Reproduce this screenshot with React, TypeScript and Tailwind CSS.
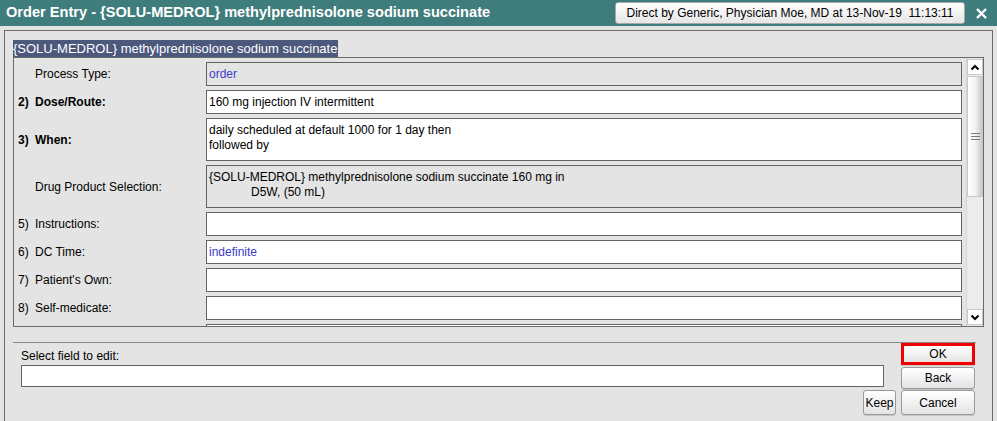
import React from 'react';

type Row = {
  num?: string;
  label?: string;
  bold?: boolean;
  lines?: string[];
  readOnly?: boolean;
  blue?: boolean;
  tall?: boolean;
  indentSecond?: boolean;
};

const rows: Row[] = [
  { label: 'Process Type:', lines: ['order'], readOnly: true, blue: true },
  { num: '2)', label: 'Dose/Route:', bold: true, lines: ['160 mg injection IV intermittent'] },
  { num: '3)', label: 'When:', bold: true, lines: ['daily scheduled at default 1000 for 1 day then', 'followed by'], tall: true },
  {
    label: 'Drug Product Selection:',
    lines: ['{SOLU-MEDROL} methylprednisolone sodium succinate 160 mg in', 'D5W, (50 mL)'],
    readOnly: true,
    tall: true,
    indentSecond: true,
  },
  { num: '5)', label: 'Instructions:', lines: [] },
  { num: '6)', label: 'DC Time:', lines: ['indefinite'], blue: true },
  { num: '7)', label: "Patient's Own:", lines: [] },
  { num: '8)', label: 'Self-medicate:', lines: [] },
  { lines: [] },
];

function FieldRow({ row }: { row: Row }) {
  return (
    <div className={`flex items-center ${row.tall ? 'h-[43px]' : 'h-[24px]'} shrink-0`}>
      {/* Label */}
      <div className={`w-[192px] flex items-center pl-[4px] text-[12px] text-black ${row.bold ? 'font-bold' : ''}`}>
        <span className="w-[17px]">{row.num}</span>
        <span>{row.label}</span>
      </div>
      {/* Value box */}
      <div
        className={`w-[756px] h-full border border-[#646464] ${row.readOnly ? 'bg-[#e4e4e4]' : 'bg-white'} ${
          row.blue ? 'text-[#3c3cc8]' : 'text-black'
        } text-[12px] px-[2px] ${row.tall ? 'pt-[4px] leading-[15px]' : 'flex items-center'}`}
      >
        {row.lines?.map((l, i) => (
          <div key={i} className={row.indentSecond && i === 1 ? 'pl-[42px]' : ''}>
            {l}
          </div>
        ))}
      </div>
    </div>
  );
}

function Caret({ down }: { down?: boolean }) {
  return (
    <svg width="10" height="7" viewBox="0 0 10 7">
      <polyline
        points={down ? '1.5,1.5 5,5 8.5,1.5' : '1.5,5.5 5,2 8.5,5.5'}
        fill="none"
        stroke="#000"
        strokeWidth="2"
      />
    </svg>
  );
}

function Scrollbar() {
  return (
    <div className="w-[17px] h-full flex flex-col bg-[#ececec] border-l border-[#d6d6d6]">
      <div className="h-[16px] mt-[1px] flex items-center justify-center bg-white border border-[#c8c8c8]">
        <Caret />
      </div>
      {/* thumb */}
      <div className="h-[121px] mt-[1px] bg-linear-to-r from-white via-[#f4f4f4] to-[#c8c8c8] border border-[#c8c8c8] flex items-center justify-center">
        <div className="flex flex-col gap-[2px]">
          <div className="w-[9px] h-px bg-[#777]" />
          <div className="w-[9px] h-px bg-[#777]" />
          <div className="w-[9px] h-px bg-[#777]" />
        </div>
      </div>
      <div className="flex-1" />
      <div className="h-[16px] mb-[1px] flex items-center justify-center bg-white border border-[#c8c8c8]">
        <Caret down />
      </div>
    </div>
  );
}

function Btn({ children, className = '' }: { children: React.ReactNode; className?: string }) {
  return (
    <div
      className={`flex items-center justify-center text-[12px] text-black rounded-[3px] border border-[#9a9a9a] bg-linear-to-b from-white to-[#e4e4e4] shadow-[0_1px_0_#c4c4c4] ${className}`}
    >
      {children}
    </div>
  );
}

export default function App() {
  return (
    <div className="w-[997px] h-[421px] bg-[#e4e4e4] overflow-hidden font-['Liberation_Sans',Arial,sans-serif]">
      {/* Title bar */}
      <div className="h-[26px] bg-[#3f7c7c] flex items-center pl-[6px] pr-[10px]">
        <span className="text-white font-bold text-[14.6px] whitespace-nowrap">
          Order Entry - {'{SOLU-MEDROL}'} methylprednisolone sodium succinate
        </span>
        <div className="ml-auto w-[350px] h-[22px] rounded-[3px] border border-[#a8a8a8] bg-linear-to-b from-white to-[#e6e6e6] flex items-center justify-center text-[12px] text-black whitespace-pre">
          Direct by Generic, Physician Moe, MD at 13-Nov-19  11:13:11
        </div>
        <svg width="11" height="11" viewBox="0 0 11 11" className="ml-[11px]">
          <path d="M1 1 L10 10 M10 1 L1 10" stroke="#fff" strokeWidth="2.4" />
        </svg>
      </div>

      {/* Outer panel */}
      <div className="ml-[4px] mt-[4px] w-[989px] h-[391px] border-l border-t border-r border-[#6a6a6a] pl-[8px] pt-[9px]">
        <div className="h-[17px] leading-[17px] w-fit bg-[#4c587c] text-white text-[13px] whitespace-nowrap pr-[1px]">
          {'{SOLU-MEDROL}'} methylprednisolone sodium succinate
        </div>

        {/* Scroll area */}
        <div className="w-[971px] h-[270px] border border-[#6a6a6a] flex overflow-hidden">
          <div className="flex-1 flex flex-col gap-[4px] pt-[4px] overflow-hidden">
            {rows.map((r, i) => (
              <FieldRow key={i} row={r} />
            ))}
          </div>
          <Scrollbar />
        </div>

        {/* Bottom */}
        <div className="mt-[15px] w-[963px] border-t border-[#8a8a8a]">
          <div className="flex">
            <div className="w-[888px] pl-[8px] pt-[6px]">
              <div className="text-[12px] text-black leading-[14px]">Select field to edit:</div>
              <div className="mt-[2px] w-[863px] h-[22px] bg-white border border-[#646464]" />
            </div>
            <div className="w-[74px] flex flex-col gap-[2px]">
              <Btn className="h-[22px] !border-[3px] !border-[#f00000] !rounded-none">OK</Btn>
              <Btn className="h-[22px]">Back</Btn>
            </div>
          </div>
          <div className="flex justify-end gap-[5px] pr-[1px] mt-[1px]">
            <Btn className="w-[33px] h-[25px]">Keep</Btn>
            <Btn className="w-[74px] h-[25px]">Cancel</Btn>
          </div>
        </div>
      </div>
    </div>
  );
}
